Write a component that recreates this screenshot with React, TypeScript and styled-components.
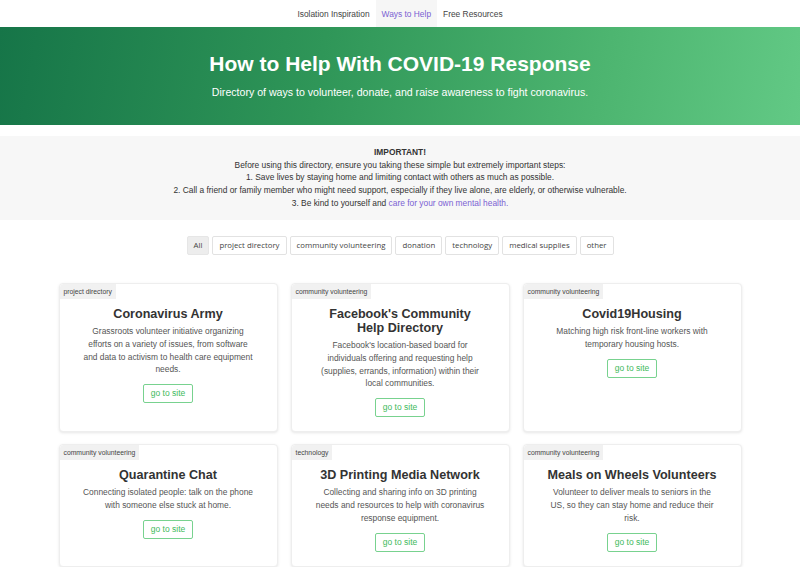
import React from 'react';
import styled, { createGlobalStyle } from 'styled-components';

const GlobalStyle = createGlobalStyle`
  body {
    margin: 0;
    background: #fff;
    font-family: "Liberation Sans", Arial, sans-serif;
    color: #333;
  }
`;

interface Resource {
  tag: string;
  title: string;
  text: string;
}

const filters = [
  'All',
  'project directory',
  'community volunteering',
  'donation',
  'technology',
  'medical supplies',
  'other',
];

const resources: Resource[] = [
  {
    tag: 'project directory',
    title: 'Coronavirus Army',
    text: 'Grassroots volunteer initiative organizing efforts on a variety of issues, from software and data to activism to health care equipment needs.',
  },
  {
    tag: 'community volunteering',
    title: "Facebook's Community Help Directory",
    text: "Facebook's location-based board for individuals offering and requesting help (supplies, errands, information) within their local communities.",
  },
  {
    tag: 'community volunteering',
    title: 'Covid19Housing',
    text: 'Matching high risk front-line workers with temporary housing hosts.',
  },
  {
    tag: 'community volunteering',
    title: 'Quarantine Chat',
    text: 'Connecting isolated people: talk on the phone with someone else stuck at home.',
  },
  {
    tag: 'technology',
    title: '3D Printing Media Network',
    text: 'Collecting and sharing info on 3D printing needs and resources to help with coronavirus response equipment.',
  },
  {
    tag: 'community volunteering',
    title: 'Meals on Wheels Volunteers',
    text: 'Volunteer to deliver meals to seniors in the US, so they can stay home and reduce their risk.',
  },
];

const Nav = styled.nav`
  display: flex;
  justify-content: center;
  height: 27px;
  background: #fff;
`;

const NavLink = styled.a<{ active?: boolean }>`
  display: flex;
  align-items: center;
  padding: 0 6px;
  font-size: 8.4px;
  text-decoration: none;
  color: ${(props) => (props.active ? '#7b5fd3' : '#444')};
  background: ${(props) => (props.active ? '#f6f6f6' : 'transparent')};
`;

const Hero = styled.header`
  height: 98px;
  box-sizing: border-box;
  padding-top: 24px;
  text-align: center;
  color: #fff;
  background: linear-gradient(100deg, #167548 0%, #2f9658 40%, #4db570 75%, #62c985 100%);
  h1 {
    margin: 0;
    font-size: 21px;
    line-height: 26px;
    font-weight: 700;
  }
  p {
    margin: 9px 0 0;
    font-size: 10.6px;
    line-height: 13px;
  }
`;

const Notice = styled.section`
  margin-top: 11px;
  height: 84px;
  box-sizing: border-box;
  padding-top: 10px;
  background: #f7f7f7;
  text-align: center;
  font-size: 8.4px;
  line-height: 12.7px;
  color: #333;
  strong {
    font-weight: 700;
  }
  a {
    color: #7b5fd3;
    text-decoration: none;
  }
`;

const FilterBar = styled.div`
  display: flex;
  justify-content: center;
  gap: 3px;
  margin-top: 16px;
`;

const FilterButton = styled.button<{ active?: boolean }>`
  height: 19px;
  padding: 0 6px;
  border: 1px solid ${(props) => (props.active ? '#e6e6e6' : '#e2e2e2')};
  border-radius: 2px;
  background: ${(props) => (props.active ? '#ededed' : '#fff')};
  color: #444;
  font-family: "Open Sans", "Noto Sans", sans-serif;
  font-size: 7.8px;
  line-height: 17px;
`;

const Grid = styled.div`
  width: 683px;
  margin: 28px auto 0;
  display: grid;
  grid-template-columns: repeat(3, 219px);
  column-gap: 13px;
  row-gap: 12px;
`;

const Card = styled.article`
  display: flex;
  flex-direction: column;
  align-items: center;
  padding: 0 23px 14px;
  border-radius: 4px;
  background: #fff;
  border: 1px solid #eeeeee;
  box-shadow: 0 1px 3px rgba(0, 0, 0, 0.1);
  text-align: center;
`;

const Badge = styled.span`
  align-self: flex-start;
  margin-left: -23px;
  padding: 0 4px;
  height: 15px;
  line-height: 15px;
  background: #f1f1f1;
  color: #444;
  font-size: 6.8px;
  border-top-left-radius: 4px;
`;

const Title = styled.h2`
  margin: 8px 0 0;
  font-size: 12.6px;
  line-height: 14px;
  font-weight: 700;
  color: #333;
`;

const Text = styled.p`
  margin: 4px 0 0;
  font-size: 8.4px;
  line-height: 12.8px;
  color: #555;
`;

const SiteButton = styled.a`
  margin-top: 8px;
  height: 19px;
  box-sizing: border-box;
  padding: 0 7px;
  border: 1px solid #78d28f;
  border-radius: 2px;
  color: #3fba5c;
  font-size: 8.5px;
  line-height: 17px;
  text-decoration: none;
`;

const App: React.FC = () => {
  return (
    <>
      <GlobalStyle />
      <Nav>
        <NavLink>Isolation Inspiration</NavLink>
        <NavLink active>Ways to Help</NavLink>
        <NavLink>Free Resources</NavLink>
      </Nav>
      <Hero>
        <h1>How to Help With COVID-19 Response</h1>
        <p>Directory of ways to volunteer, donate, and raise awareness to fight coronavirus.</p>
      </Hero>
      <Notice>
        <strong>IMPORTANT!</strong>
        <br />
        Before using this directory, ensure you taking these simple but extremely important steps:
        <br />
        1. Save lives by staying home and limiting contact with others as much as possible.
        <br />
        2. Call a friend or family member who might need support, especially if they live alone, are elderly, or otherwise vulnerable.
        <br />
        3. Be kind to yourself and <a>care for your own mental health.</a>
      </Notice>
      <FilterBar>
        {filters.map((f) => (
          <FilterButton key={f} active={f === 'All'}>
            {f}
          </FilterButton>
        ))}
      </FilterBar>
      <Grid>
        {resources.map((r) => (
          <Card key={r.title}>
            <Badge>{r.tag}</Badge>
            <Title>{r.title}</Title>
            <Text>{r.text}</Text>
            <SiteButton>go to site</SiteButton>
          </Card>
        ))}
      </Grid>
    </>
  );
};

export default App;
